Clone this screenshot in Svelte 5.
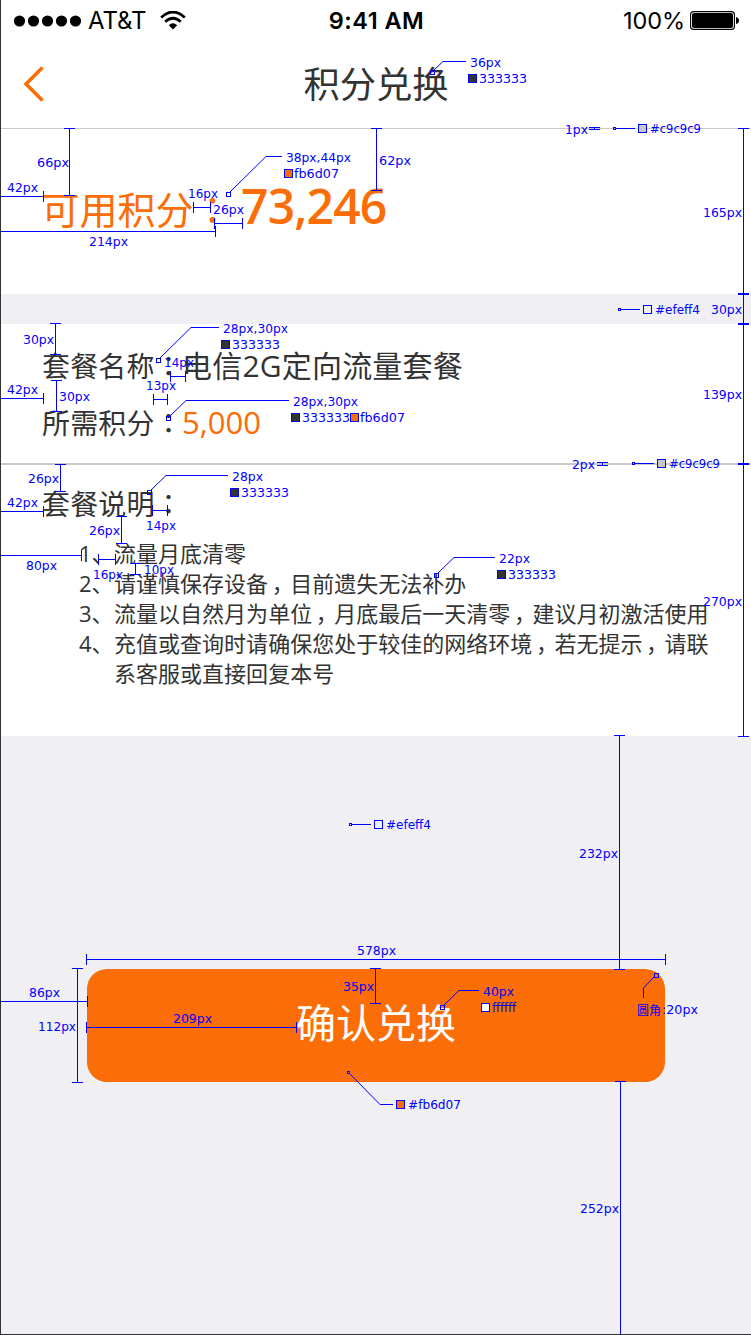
<script>
  const BLUE = '#0000ff';

  // Text labels: [content, x, baseline, width]
  const labels = [
    ['36px', 470, 67, 31], ['333333', 479, 83, 48],
    ['1px', 565, 134, 23], ['#c9c9c9', 650, 133, 51],
    ['66px', 37, 167, 32], ['62px', 379, 165, 32], ['38px,44px', 286, 162, 65], ['fb6d07', 294, 178, 45],
    ['42px', 7, 192, 31], ['16px', 188, 198, 30], ['26px', 213, 214, 31], ['214px', 89, 246, 39],
    ['165px', 703, 217, 39], ['30px', 711, 314, 31], ['#efeff4', 655, 314, 45],
    ['30px', 23, 344, 31], ['28px,30px', 223, 333, 65], ['333333', 232, 349, 48],
    ['14px', 164, 367, 30], ['13px', 146, 390, 30], ['42px', 7, 394, 31], ['30px', 59, 401, 31],
    ['28px,30px', 293, 406, 65], ['333333', 302, 422, 48], ['fb6d07', 360, 422, 45],
    ['139px', 703, 399, 39], ['2px', 572, 469, 23], ['#c9c9c9', 669, 468, 51],
    ['26px', 28, 483, 31], ['28px', 232, 481, 31], ['333333', 241, 497, 48],
    ['42px', 7, 507, 31], ['14px', 146, 530, 30], ['26px', 89, 535, 31], ['80px', 26, 570, 31],
    ['16px', 93, 579, 30], ['10px', 144, 574, 30], ['22px', 499, 563, 31], ['333333', 508, 579, 48],
    ['270px', 703, 606, 39], ['#efeff4', 386, 829, 45], ['232px', 579, 858, 39],
    ['578px', 357, 955, 39], ['35px', 343, 991, 31], ['86px', 29, 997, 31],
    ['209px', 173, 1023, 39], ['112px', 38, 1031, 38], ['40px', 483, 996, 31], ['ffffff', 492, 1012, 24],
    ['圆角', 637, 1015, 24], [':20px', 662, 1014, 36], ['#fb6d07', 408, 1109, 53], ['252px', 580, 1213, 39]
  ];

  // Vertical rulers: [x, top, bottom]
  const vertical = [
    [69, 128, 195], [376, 128, 190], [743, 128, 293], [743, 294, 323], [743, 324, 463], [743, 464, 736],
    [55, 323, 354], [56, 380, 411], [60, 464, 491], [121, 516, 543], [135, 563, 574],
    [619, 735, 969], [77, 968, 1082], [375, 968, 1003], [620, 1081, 1334]
  ];

  // Horizontal rulers: [y, left, right]
  const horizontal = [
    [196, 0, 43], [207, 193, 210], [223, 214, 242], [231, 0, 215],
    [376, 170, 185], [399, 153, 167], [398, 0, 43], [511, 0, 43], [510, 152, 167],
    [555, 0, 81], [559, 98, 115], [959, 86, 665], [1001, 0, 87], [1027, 86, 296]
  ];

  // Colour swatches: [x, y, fill]
  const swatches = [
    [468, 74, '#333333'], [638, 124, '#c9c9c9'], [284, 169, '#fb6d07'], [643, 305, '#efeff4'],
    [221, 340, '#333333'], [291, 413, '#333333'], [350, 413, '#fb6d07'], [657, 459, '#c9c9c9'],
    [230, 488, '#333333'], [497, 570, '#333333'], [374, 820, '#efeff4'], [481, 1003, '#ffffff'],
    [396, 1100, '#fb6d07']
  ];

  // Callouts: [anchor x, anchor y, anchor size, path]
  const leaders = [
    [430, 70, 4, 'M434 70L443 61.5H466'], [613, 127, 2, 'M616 128.5H635'],
    [226, 192, 4, 'M230 192L266 156.5H282'], [618, 308, 2, 'M621 309.5H640'],
    [156, 358, 4, 'M160 358L191 327.5H219'], [166, 416, 4, 'M170 416L186 400.5H289'],
    [632, 462, 2, 'M635 463.5H654'], [147, 490, 4, 'M151 490L166 475.5H228'],
    [434, 573, 4, 'M438 573L454 557.5H495'], [349, 823, 2, 'M352 824.5H371'],
    [440, 1005, 4, 'M444 1005L459 990.5H479'], [654, 973, 4, 'M654 977L643.5 988V998'],
    [347, 1071, 2, 'M350 1074L380 1104.5H393']
  ];

  const notes = [
    ['1、', '流量月底清零'],
    ['2、', '请谨慎保存设备，目前遗失无法补办'],
    ['3、', '流量以自然月为单位，月底最后一天清零，建议月初激活使用'],
    ['4、', '充值或查询时请确保您处于较佳的网络环境，若无提示，请联系客服或直接回复本号']
  ];
</script>

<div class="screen">
  <header>
    <div class="status">
      <div class="carrier">
        <svg width="68" height="12" viewBox="0 0 68 12">
          {#each [0, 1, 2, 3, 4] as i}<circle cx={5.5 + i * 14} cy="6" r="5.6" />{/each}
        </svg>
        <span class="network">AT&amp;T</span>
        <svg width="26" height="19" viewBox="0 0 26 19">
          <path d="M1.2 6.5Q13-4.5 24.8 6.5" fill="none" stroke="#000" stroke-width="2.8" />
          <path d="M5.2 10.8Q13 3.7 20.8 10.8" fill="none" stroke="#000" stroke-width="2.7" />
          <path d="M8.8 14.2Q13 10.5 17.2 14.2L13 18.4Z" />
        </svg>
      </div>
      <span class="clock">9:41 AM</span>
      <div class="power">
        <span>100%</span>
        <svg width="49" height="20" viewBox="0 0 49 20">
          <rect x=".6" y=".6" width="43.8" height="17.8" rx="3" fill="none" stroke="#000" stroke-width="1.1" />
          <rect x="2" y="2" width="41" height="15" rx="2" />
          <path d="M46 6Q49 7 49 9.5T46 13Z" />
        </svg>
      </div>
    </div>
    <div class="nav">
      <svg class="back" width="22" height="36" viewBox="0 0 22 36">
        <path d="M20.5 1.5L4 18L20.5 34.5" fill="none" stroke="#fb6d07" stroke-width="3.6" />
      </svg>
      <h1>积分兑换</h1>
    </div>
  </header>

  <section class="balance">
    <span class="label">可用积分<i>：</i></span><strong>73,246</strong>
  </section>

  <section class="plan">
    <p><span>套餐名称<i>：</i></span><b>电信2G定向流量套餐</b></p>
    <p><span>所需积分<i>：</i></span><b class="cost">5,000</b></p>
  </section>

  <section class="details">
    <h2>套餐说明<i>：</i></h2>
    <ol>
      {#each notes as [num, text]}
        <li><span class="num">{num}</span><span class="text">{#each text.split('，') as part, i}{#if i}<span class="comma">，</span>{/if}{part}{/each}</span></li>
      {/each}
    </ol>
  </section>

  <footer><button>确认兑换</button></footer>

  <svg class="specs" width="751" height="1335" viewBox="0 0 751 1335" shape-rendering="crispEdges">
    {#each vertical as [x, a, b]}
      <path d="M{x + 0.5} {a}V{b + 1}M{x - 5} {a + 0.5}h11M{x - 5} {b + 0.5}h11" />
    {/each}
    {#each horizontal as [y, a, b]}
      <path d="M{a} {y + 0.5}H{b + 1}M{a + 0.5} {y - 5}v11M{b + 0.5} {y - 5}v11" />
    {/each}
    <path d="M589 127.5h11M589 129.5h11M594.5 127v3M597 462.5h11M597 465.5h11M602.5 462v4" />
    {#each leaders as [x, y, s, d]}
      <path {d} shape-rendering="auto" />
      <rect x={x + 0.5} y={y + 0.5} width={s} height={s} />
    {/each}
    {#each swatches as [x, y, fill]}
      <rect x={x + 0.5} y={y + 0.5} width="8" height="8" {fill} />
    {/each}
    {#each labels as [text, x, y, w]}
      <text {x} {y} textLength={w} lengthAdjust="spacingAndGlyphs" fill={BLUE}>{text}</text>
    {/each}
  </svg>
</div>

<style>
  :global(body) { margin: 0; }
  .screen {
    position: relative;
    box-sizing: border-box;
    width: 751px;
    height: 1335px;
    overflow: hidden;
    border-left: 1px solid #333;
    border-bottom: 1px solid #333;
    background: #efeff4;
    color: #333;
    font-family: "Open Sans", "Noto Sans CJK SC", sans-serif;
  }
  h1, h2, p, ol { margin: 0; padding: 0; font-weight: 400; }
  i { font-family: "Noto Sans CJK TC", sans-serif; font-style: normal; }
  header {
    box-sizing: border-box;
    height: 129px;
    border-bottom: 1px solid #c9c9c9;
    background: #fff;
  }
  .status {
    display: grid;
    grid-template-columns: 1fr auto 1fr;
    align-items: center;
    height: 41px;
    padding: 0 12px 0 13px;
    color: #000;
    font: 24px/41px Inter, sans-serif;
  }
  .carrier, .power { display: flex; align-items: center; }
  .network { margin: 0 14px 0 6px; letter-spacing: -0.1px; }
  .clock { font-weight: 600; font-size: 23.5px; letter-spacing: 0.5px; }
  .power { justify-content: flex-end; gap: 5px; font-size: 23.5px; letter-spacing: -0.1px; }
  .nav {
    display: grid;
    grid-template-columns: 100px 1fr 100px;
    align-items: center;
    height: 86px;
  }
  .back { margin-left: 20.5px; }
  h1 { text-align: center; font-size: 36.3px; line-height: 86px; }
  .balance {
    display: flex;
    align-items: baseline;
    height: 165px;
    padding: 0 41px;
    background: #fff;
    color: #fb6d07;
    line-height: 154px;
  }
  .label { width: 199px; font-size: 38px; text-indent: -0.5px; white-space: nowrap; }
  strong { font-size: 48px; font-weight: 600; letter-spacing: -0.8px; }
  .plan {
    box-sizing: border-box;
    height: 141px;
    margin-top: 30px;
    padding: 13px 41px 0;
    border-bottom: 2px solid #c9c9c9;
    background: #fff;
  }
  .plan p { display: flex; align-items: baseline; height: 57px; font-size: 28px; line-height: 57px; white-space: nowrap; }
  .plan span { flex: none; width: 140px; }
  .plan span, h2 { letter-spacing: 0.15px; }
  b { font-size: 30px; font-weight: 400; letter-spacing: 0.2px; }
  .cost { color: #fb6d07; font-size: 31px; letter-spacing: 0; }
  .details {
    box-sizing: border-box;
    height: 271px;
    padding: 17px 40px 0 41px;
    background: #fff;
  }
  h2 { height: 56px; font-size: 28px; line-height: 42px; }
  ol { list-style: none; padding-left: 37px; font-size: 22px; line-height: 30px; }
  li { display: flex; }
  .num { flex: none; width: 35px; }
  .text { width: 597px; letter-spacing: 0.02px; word-break: break-all; }
  .comma { position: relative; left: 3.5px; }
  footer { padding: 233px 85px 0 86px; }
  button {
    display: block;
    width: 578px;
    height: 113px;
    padding: 0 0 9px;
    border: 0;
    border-radius: 20px;
    background: #fb6d07;
    color: #fff;
    font: 40px "Noto Sans CJK SC", sans-serif;
  }
  .specs { position: absolute; top: 0; left: -1px; pointer-events: none; }
  .specs path, .specs rect { stroke: #00f; stroke-width: 1; }
  .specs path { fill: none; }
  .specs rect:not([fill]) { fill: none; }
  .specs text { font: 12.5px "DejaVu Sans", "Noto Sans CJK SC", sans-serif; }
</style>
